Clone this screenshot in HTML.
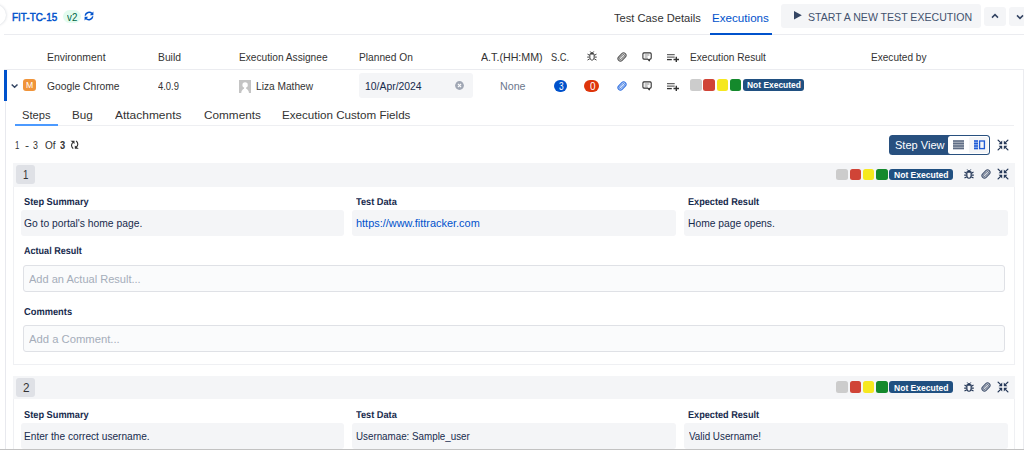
<!DOCTYPE html><html><head><meta charset="utf-8"><title>Test Execution</title><style>
html,body{margin:0;padding:0;}body{width:1024px;height:450px;overflow:hidden;position:relative;background:#fff;font-family:"Liberation Sans", sans-serif;}
.a{position:absolute;}.t{position:absolute;white-space:nowrap;line-height:1;transform-origin:0 0;}
</style></head><body>
<div class="a" style="left:-14.5px;top:4.8px;width:20.5px;height:20.5px;background:#fff;border-radius:10.25px;box-shadow:0 0 3px rgba(9,30,66,.22);"></div>
<div class="a" style="left:62.5px;top:10px;width:18.5px;height:13px;background:#e3fcef;border-radius:6.5px;"></div>
<svg class="a" style="left:84px;top:11px" width="10" height="10" viewBox="0 0 10 10"><g fill="none" stroke="#0052cc" stroke-width="1.45"><path d="M1.2 4.6A4 4 0 0 1 8 2.6"/><path d="M8.8 5.4A4 4 0 0 1 2 7.4"/></g><path d="M9.4 0.6V4.2H5.8Z M0.6 9.4V5.8H4.2Z" fill="#0052cc"/></svg>
<div class="a" style="left:4px;top:34px;width:1020px;height:1px;background:#ebecf0;"></div>
<div class="a" style="left:710px;top:33px;width:62px;height:2px;background:#0052cc;"></div>
<div class="a" style="left:781.3px;top:3.6px;width:199.7px;height:24.7px;background:#f4f5f7;border-radius:3px;"></div>
<svg class="a" style="left:793.8px;top:11.4px" width="8" height="8.4" viewBox="0 0 8 8.4"><path d="M0 0L7.8 4.2L0 8.4Z" fill="#344563"/></svg>
<div class="a" style="left:984.2px;top:7px;width:21.5px;height:19px;background:#f4f5f7;border-radius:3px;"></div>
<svg class="a" style="left:991px;top:13.2px" width="8" height="6" viewBox="0 0 8 6"><path d="M1 4.6L4 1.6L7 4.6" fill="none" stroke="#344563" stroke-width="1.5"/></svg>
<div class="a" style="left:1009.2px;top:7px;width:21.5px;height:19px;background:#f4f5f7;border-radius:3px;"></div>
<svg class="a" style="left:1016.2px;top:13.6px" width="8" height="6" viewBox="0 0 8 6"><path d="M1 1.4L4 4.4L7 1.4" fill="none" stroke="#344563" stroke-width="1.5"/></svg>
<div class="a" style="left:4px;top:69px;width:1020px;height:1px;background:#ebecf0;"></div>
<svg class="a" style="left:584px;top:48.4px" width="16" height="16" viewBox="-8 -8 16 16"><g fill="none" stroke="#444"><path stroke-width="0.94" d="M-2.1 -1.9H2.1V1.4Q2.1 4 0 4.3Q-2.1 4 -2.1 1.4Z"/><path stroke-width="0.98" d="M-2.2 -.6L-4.5 -1.9M-2.2 1.1H-4.8M-2.1 2.7L-4.5 4.1M2.2 -.6L4.5 -1.9M2.2 1.1H4.8M2.1 2.7L4.5 4.1"/><path stroke-width=".8" d="M-1 -3.6L-1.9 -4.7M1 -3.6L1.9 -4.7"/></g><path d="M-1.9 -2A1.9 2 0 0 1 1.9 -2Z" fill="#444"/></svg>
<svg class="a" style="left:613.9px;top:48.5px" width="16" height="16" viewBox="-8 -8 16 16"><g transform="rotate(45)" stroke="#555" fill="none"><rect x="-2.5" y="-4.7" width="5" height="9.4" rx="2.5" stroke-width="1.0" fill="#555" fill-opacity=".18"/><rect x="-1.05" y="-3.1" width="2.1" height="6.4" rx="1.05" stroke-width="0.85"/></g></svg>
<svg class="a" style="left:638.5px;top:48.5px" width="16" height="16" viewBox="-8 -8 16 16"><path d="M-3.1 -4.1H3.2A1 1 0 0 1 4.2 -3.1V1.1A1 1 0 0 1 3.2 2.1H2.9L2.3 3.9L.8 2.1H-3.1A1 1 0 0 1 -4.1 1.1V-3.1A1 1 0 0 1 -3.1 -4.1Z" fill="none" stroke="#333" stroke-width="1.1" stroke-linejoin="round"/><path d="M-2.3 -2H2.4M-2.3 0H.6" stroke="#333" stroke-opacity=".55" stroke-width="1"/><path d="M1 2.1H2.9L2.3 3.7Z" fill="#333"/></svg>
<svg class="a" style="left:665px;top:50px" width="16" height="16" viewBox="-8 -8 16 16"><path d="M-6 -3.3H1.7M-6 -.9H1.7" stroke="#333" stroke-opacity=".75" stroke-width="1.3"/><path d="M-6 1.6H-1.2" stroke="#333" stroke-width="1.3"/><path d="M.5 1.5H6M3.3 -1.2V4" stroke="#333" stroke-width="1.4"/></svg>
<div class="a" style="left:4px;top:70px;width:2.5px;height:31px;background:#0052cc;"></div>
<div class="a" style="left:4.5px;top:101px;width:1px;height:349px;background:#e8e9ee;"></div>
<svg class="a" style="left:10px;top:82px" width="10" height="8" viewBox="0 0 10 8"><path d="M1.7 2.5L4.6 5.3L7.5 2.5" fill="none" stroke="#344563" stroke-width="1.5"/></svg>
<div class="a" style="left:23.2px;top:78.8px;width:12.9px;height:11.9px;background:#f0943a;border-radius:3px;"></div>
<div class="a" style="left:239px;top:79.6px;width:12.1px;height:13.2px;background:#c4c4c4;"></div>
<svg class="a" style="left:239px;top:79.6px" width="12.1" height="13.2" viewBox="0 0 12.1 13.2"><circle cx="6.1" cy="4.9" r="2.7" fill="#fff"/><path d="M2.2 13.2C2.4 10.6 3.6 9.4 5 8.8L5.2 7H7L7.2 8.8C8.6 9.4 9.8 10.6 10 13.2Z" fill="#fff"/></svg>
<div class="a" style="left:358.5px;top:73px;width:114.5px;height:24.5px;background:#f4f5f7;border-radius:3px;"></div>
<svg class="a" style="left:455.4px;top:80.9px" width="9" height="9" viewBox="0 0 9 9"><circle cx="4.5" cy="4.5" r="4.4" fill="#a0a7b4"/><path d="M2.9 2.9L6.1 6.1M6.1 2.9L2.9 6.1" stroke="#fff" stroke-width="1.1"/></svg>
<div class="a" style="left:553.6px;top:79.5px;width:13.8px;height:12.4px;background:#0052cc;border-radius:6.2px;"></div>
<div class="a" style="left:583.8px;top:79.6px;width:15.2px;height:12.3px;background:#de350b;border-radius:6.2px;"></div>
<svg class="a" style="left:613.8px;top:78px" width="16" height="16" viewBox="-8 -8 16 16"><g transform="rotate(45)" stroke="#2f6fe0" fill="none"><rect x="-2.5" y="-4.7" width="5" height="9.4" rx="2.5" stroke-width="1.0" fill="#2f6fe0" fill-opacity=".18"/><rect x="-1.05" y="-3.1" width="2.1" height="6.4" rx="1.05" stroke-width="0.85"/></g></svg>
<svg class="a" style="left:638.5px;top:77.5px" width="16" height="16" viewBox="-8 -8 16 16"><path d="M-3.1 -4.1H3.2A1 1 0 0 1 4.2 -3.1V1.1A1 1 0 0 1 3.2 2.1H2.9L2.3 3.9L.8 2.1H-3.1A1 1 0 0 1 -4.1 1.1V-3.1A1 1 0 0 1 -3.1 -4.1Z" fill="none" stroke="#333" stroke-width="1.1" stroke-linejoin="round"/><path d="M-2.3 -2H2.4M-2.3 0H.6" stroke="#333" stroke-opacity=".55" stroke-width="1"/><path d="M1 2.1H2.9L2.3 3.7Z" fill="#333"/></svg>
<svg class="a" style="left:665px;top:79px" width="16" height="16" viewBox="-8 -8 16 16"><path d="M-6 -3.3H1.7M-6 -.9H1.7" stroke="#333" stroke-opacity=".75" stroke-width="1.3"/><path d="M-6 1.6H-1.2" stroke="#333" stroke-width="1.3"/><path d="M.5 1.5H6M3.3 -1.2V4" stroke="#333" stroke-width="1.4"/></svg>
<div class="a" style="left:690.3px;top:78.9px;width:11.5px;height:11.7px;background:#cccccc;border-radius:2.5px;"></div>
<div class="a" style="left:703.3px;top:78.9px;width:11.9px;height:11.7px;background:#d04437;border-radius:2.5px;"></div>
<div class="a" style="left:716.8px;top:78.9px;width:11.6px;height:11.7px;background:#f6e81f;border-radius:2.5px;"></div>
<div class="a" style="left:730px;top:78.9px;width:11.4px;height:11.7px;background:#14892c;border-radius:2.5px;"></div>
<div class="a" style="left:743.2px;top:78.6px;width:60.8px;height:12.2px;background:#205081;border-radius:3px;"></div>
<div class="a" style="left:15px;top:125px;width:999px;height:1px;background:#eeeff2;"></div>
<div class="a" style="left:15px;top:124px;width:43px;height:2px;background:#4c9aff;"></div>
<svg class="a" style="left:69px;top:139px" width="12" height="12" viewBox="69 139 12 12"><g fill="none" stroke="#333" stroke-width="1.15"><path d="M73 142.4Q69.9 145.3 73.2 148.6"/><path d="M76.2 140.9Q79.4 144.3 76.2 147.2"/></g><path d="M70.5 140.8H74.5V144.1Z M78.8 148.8H74.8V145.5Z" fill="#333"/></svg>
<div class="a" style="left:889px;top:135px;width:101px;height:19.8px;background:#28507f;border-radius:3.5px;"></div>
<div class="a" style="left:948.4px;top:136px;width:40.8px;height:18px;background:#fff;border-radius:2.5px;"></div>
<div class="a" style="left:968.8px;top:137px;width:19px;height:16px;background:#f4f5f7;border-radius:1.5px;"></div>
<svg class="a" style="left:953px;top:139.5px" width="11" height="10" viewBox="0 0 11 10"><rect x="0" y=".4" width="11" height="8.8" fill="#b3bac5"/><path d="M0 1H11M0 3.5H11M0 6H11M0 8.5H11" stroke="#5e6c84" stroke-width="1.3"/></svg>
<svg class="a" style="left:974px;top:139.5px" width="11.5" height="10" viewBox="0 0 11.5 10"><rect x="0" y=".4" width="4" height="8.8" fill="#9db8ee"/><path d="M0 1H4M0 3.5H4M0 6H4M0 8.5H4" stroke="#1f5bd6" stroke-width="1.3"/><rect x="5.6" y="1" width="4.8" height="7.6" fill="none" stroke="#1f5bd6" stroke-width="1.35"/></svg>
<svg class="a" style="left:994.6px;top:136.5px" width="16" height="16" viewBox="-8 -8 16 16"><g stroke="#253858" stroke-width="1.3" stroke-linecap="round" fill="none"><path d="M-4.9 -4.9L-2.6 -2.6M4.9 -4.9L2.6 -2.6M-4.9 4.9L-2.6 2.6M4.9 4.9L2.6 2.6"/></g><path d="M-.8 -4.4V-.8H-4.4ZM.8 -4.4V-.8H4.4ZM-.8 4.4V.8H-4.4ZM.8 4.4V.8H4.4Z" fill="#253858"/></svg>
<div class="a" style="left:13px;top:163px;width:1002px;height:23.6px;background:#f4f5f7;"></div>
<div class="a" style="left:16px;top:164.9px;width:19.3px;height:19.3px;background:#dfe1e6;border-radius:3px;"></div>
<div class="a" style="left:836.1px;top:168.75px;width:11.8px;height:11.2px;background:#cccccc;border-radius:2.5px;"></div>
<div class="a" style="left:849.8px;top:168.75px;width:11.3px;height:11.2px;background:#d04437;border-radius:2.5px;"></div>
<div class="a" style="left:862.9px;top:168.75px;width:11.3px;height:11.2px;background:#f6e81f;border-radius:2.5px;"></div>
<div class="a" style="left:875.8px;top:168.75px;width:12.1px;height:11.2px;background:#14892c;border-radius:2.5px;"></div>
<div class="a" style="left:889px;top:168.75px;width:64px;height:11.2px;background:#205081;border-radius:3px;"></div>
<svg class="a" style="left:960.65px;top:165.9px" width="16" height="16" viewBox="-8 -8 16 16"><g fill="none" stroke="#253858"><path stroke-width="1.10" d="M-2.1 -1.9H2.1V1.4Q2.1 4 0 4.3Q-2.1 4 -2.1 1.4Z"/><path stroke-width="1.15" d="M-2.2 -.6L-4.5 -1.9M-2.2 1.1H-4.8M-2.1 2.7L-4.5 4.1M2.2 -.6L4.5 -1.9M2.2 1.1H4.8M2.1 2.7L4.5 4.1"/><path stroke-width=".8" d="M-1 -3.6L-1.9 -4.7M1 -3.6L1.9 -4.7"/></g><path d="M-1.9 -2A1.9 2 0 0 1 1.9 -2Z" fill="#253858"/></svg>
<svg class="a" style="left:977.9px;top:166px" width="16" height="16" viewBox="-8 -8 16 16"><g transform="rotate(45)" stroke="#42526e" fill="none"><rect x="-2.5" y="-4.7" width="5" height="9.4" rx="2.5" stroke-width="1.0" fill="#42526e" fill-opacity=".18"/><rect x="-1.05" y="-3.1" width="2.1" height="6.4" rx="1.05" stroke-width="0.85"/></g></svg>
<svg class="a" style="left:994.5px;top:166px" width="16" height="16" viewBox="-8 -8 16 16"><g stroke="#253858" stroke-width="1.3" stroke-linecap="round" fill="none"><path d="M-4.9 -4.9L-2.6 -2.6M4.9 -4.9L2.6 -2.6M-4.9 4.9L-2.6 2.6M4.9 4.9L2.6 2.6"/></g><path d="M-.8 -4.4V-.8H-4.4ZM.8 -4.4V-.8H4.4ZM-.8 4.4V.8H-4.4ZM.8 4.4V.8H4.4Z" fill="#253858"/></svg>
<div class="a" style="left:21px;top:210.2px;width:323px;height:25.7px;background:#f4f5f7;border-radius:3px;"></div>
<div class="a" style="left:352px;top:210.2px;width:323.5px;height:25.7px;background:#f4f5f7;border-radius:3px;"></div>
<div class="a" style="left:683.5px;top:210.2px;width:324px;height:25.7px;background:#f4f5f7;border-radius:3px;"></div>
<div class="a" style="left:23px;top:265px;width:982px;height:27px;background:#fafbfc;border-radius:3px;border:1px solid #dfe1e6;box-sizing:border-box;"></div>
<div class="a" style="left:23px;top:325px;width:982px;height:27px;background:#fafbfc;border-radius:3px;border:1px solid #dfe1e6;box-sizing:border-box;"></div>
<div class="a" style="left:13px;top:186.6px;width:1002px;height:178.9px;background:transparent;border:1px solid #eff0f3;box-sizing:border-box;border-top:none;"></div>
<div class="a" style="left:13px;top:375.7px;width:1002px;height:23.6px;background:#f4f5f7;"></div>
<div class="a" style="left:16px;top:377.59999999999997px;width:19.3px;height:19.3px;background:#dfe1e6;border-radius:3px;"></div>
<div class="a" style="left:836.1px;top:381.45px;width:11.8px;height:11.2px;background:#cccccc;border-radius:2.5px;"></div>
<div class="a" style="left:849.8px;top:381.45px;width:11.3px;height:11.2px;background:#d04437;border-radius:2.5px;"></div>
<div class="a" style="left:862.9px;top:381.45px;width:11.3px;height:11.2px;background:#f6e81f;border-radius:2.5px;"></div>
<div class="a" style="left:875.8px;top:381.45px;width:12.1px;height:11.2px;background:#14892c;border-radius:2.5px;"></div>
<div class="a" style="left:889px;top:381.45px;width:64px;height:11.2px;background:#205081;border-radius:3px;"></div>
<svg class="a" style="left:960.65px;top:378.59999999999997px" width="16" height="16" viewBox="-8 -8 16 16"><g fill="none" stroke="#253858"><path stroke-width="1.10" d="M-2.1 -1.9H2.1V1.4Q2.1 4 0 4.3Q-2.1 4 -2.1 1.4Z"/><path stroke-width="1.15" d="M-2.2 -.6L-4.5 -1.9M-2.2 1.1H-4.8M-2.1 2.7L-4.5 4.1M2.2 -.6L4.5 -1.9M2.2 1.1H4.8M2.1 2.7L4.5 4.1"/><path stroke-width=".8" d="M-1 -3.6L-1.9 -4.7M1 -3.6L1.9 -4.7"/></g><path d="M-1.9 -2A1.9 2 0 0 1 1.9 -2Z" fill="#253858"/></svg>
<svg class="a" style="left:977.9px;top:378.7px" width="16" height="16" viewBox="-8 -8 16 16"><g transform="rotate(45)" stroke="#42526e" fill="none"><rect x="-2.5" y="-4.7" width="5" height="9.4" rx="2.5" stroke-width="1.0" fill="#42526e" fill-opacity=".18"/><rect x="-1.05" y="-3.1" width="2.1" height="6.4" rx="1.05" stroke-width="0.85"/></g></svg>
<svg class="a" style="left:994.5px;top:378.7px" width="16" height="16" viewBox="-8 -8 16 16"><g stroke="#253858" stroke-width="1.3" stroke-linecap="round" fill="none"><path d="M-4.9 -4.9L-2.6 -2.6M4.9 -4.9L2.6 -2.6M-4.9 4.9L-2.6 2.6M4.9 4.9L2.6 2.6"/></g><path d="M-.8 -4.4V-.8H-4.4ZM.8 -4.4V-.8H4.4ZM-.8 4.4V.8H-4.4ZM.8 4.4V.8H4.4Z" fill="#253858"/></svg>
<div class="a" style="left:21px;top:423.2px;width:323px;height:25.7px;background:#f4f5f7;border-radius:3px;"></div>
<div class="a" style="left:352px;top:423.2px;width:323.5px;height:25.7px;background:#f4f5f7;border-radius:3px;"></div>
<div class="a" style="left:683.5px;top:423.2px;width:324px;height:25.7px;background:#f4f5f7;border-radius:3px;"></div>
<div class="a" style="left:13px;top:399.3px;width:1002px;height:100px;background:transparent;border:1px solid #eff0f3;box-sizing:border-box;border-top:none;"></div>
<div class="a" style="left:1023px;top:69px;width:1px;height:381px;background:#ebecf0;"></div>
<div class="a" style="left:0px;top:448.5px;width:1024px;height:2px;background:#c2c2c2;"></div>
<span class="t" style="left:12.45px;top:12px;font-size:11.5px;color:#0052cc;-webkit-text-stroke:0.5px #0052cc;transform:scaleX(0.8629);">FIT-TC-15</span>
<span class="t" style="left:66.82px;top:12px;font-size:11px;color:#006644;transform:scaleX(0.8887);">v2</span>
<span class="t" style="left:614.13px;top:13px;font-size:11.5px;color:#333;transform:scaleX(0.9699);">Test Case Details</span>
<span class="t" style="left:712.33px;top:13px;font-size:11.5px;color:#0052cc;transform:scaleX(1.0112);">Executions</span>
<span class="t" style="left:807.69px;top:12px;font-size:11.5px;color:#42526e;transform:scaleX(0.9188);">START A NEW TEST EXECUTION</span>
<span class="t" style="left:47.23px;top:52px;font-size:11px;color:#333333;transform:scaleX(0.9478);">Environment</span>
<span class="t" style="left:158.24px;top:52px;font-size:11px;color:#333333;transform:scaleX(0.9382);">Build</span>
<span class="t" style="left:239.47px;top:52px;font-size:11px;color:#333333;transform:scaleX(0.9220);">Execution Assignee</span>
<span class="t" style="left:358.77px;top:52px;font-size:11px;color:#333333;transform:scaleX(0.9260);">Planned On</span>
<span class="t" style="left:481.26px;top:52px;font-size:11px;color:#333333;transform:scaleX(0.9705);">A.T.(HH:MM)</span>
<span class="t" style="left:551.44px;top:52px;font-size:11px;color:#333333;transform:scaleX(0.8440);">S.C.</span>
<span class="t" style="left:690.47px;top:52px;font-size:11px;color:#333333;transform:scaleX(0.9192);">Execution Result</span>
<span class="t" style="left:870.78px;top:52px;font-size:11px;color:#333333;transform:scaleX(0.9154);">Executed by</span>
<span class="t" style="left:26.34px;top:81px;font-size:9px;color:#fff;transform:scaleX(0.9600);">M</span>
<span class="t" style="left:47.24px;top:81px;font-size:11px;color:#333333;transform:scaleX(0.9346);">Google Chrome</span>
<span class="t" style="left:158.26px;top:81px;font-size:11px;color:#333333;transform:scaleX(0.8567);">4.0.9</span>
<span class="t" style="left:255.78px;top:81px;font-size:11px;color:#333333;transform:scaleX(0.9244);">Liza Mathew</span>
<span class="t" style="left:365.01px;top:81px;font-size:11px;color:#172b4d;transform:scaleX(0.9453);">10/Apr/2024</span>
<span class="t" style="left:499.91px;top:81px;font-size:11px;color:#6b778c;transform:scaleX(0.9708);">None</span>
<span class="t" style="left:558.68px;top:81px;font-size:11px;color:#fff;transform:scaleX(0.7557);">3</span>
<span class="t" style="left:589.59px;top:81px;font-size:11px;color:#fff;transform:scaleX(0.9023);">0</span>
<span class="t" style="left:747.14px;top:80px;font-size:9.5px;color:#fff;font-weight:700;transform:scaleX(0.8871);">Not Executed</span>
<span class="t" style="left:22.21px;top:110px;font-size:11.5px;color:#333333;transform:scaleX(0.9726);">Steps</span>
<span class="t" style="left:71.86px;top:110px;font-size:11.5px;color:#333333;transform:scaleX(1.0158);">Bug</span>
<span class="t" style="left:114.80px;top:110px;font-size:11.5px;color:#333333;transform:scaleX(1.0401);">Attachments</span>
<span class="t" style="left:203.55px;top:110px;font-size:11.5px;color:#333333;transform:scaleX(1.0228);">Comments</span>
<span class="t" style="left:282.20px;top:110px;font-size:11.5px;color:#333333;transform:scaleX(1.0095);">Execution Custom Fields</span>
<span class="t" style="left:14.64px;top:140px;font-size:11px;color:#333333;transform:scaleX(0.7131);">1</span>
<span class="t" style="left:25.49px;top:140px;font-size:11px;color:#333333;transform:scaleX(1.1125);">-</span>
<span class="t" style="left:33.46px;top:140px;font-size:11px;color:#333333;transform:scaleX(0.7993);">3</span>
<span class="t" style="left:44.98px;top:140px;font-size:11px;color:#333333;transform:scaleX(0.9111);">Of</span>
<span class="t" style="left:59.99px;top:140px;font-size:11px;color:#333333;font-weight:700;transform:scaleX(0.8458);">3</span>
<span class="t" style="left:894.61px;top:140px;font-size:11.5px;color:#fff;transform:scaleX(0.9605);">Step View</span>
<span class="t" style="left:22.96px;top:169px;font-size:12.5px;color:#333333;transform:scaleX(0.7720);">1</span>
<span class="t" style="left:894.21px;top:170px;font-size:9.5px;color:#fff;font-weight:700;transform:scaleX(0.8987);">Not Executed</span>
<span class="t" style="left:24.49px;top:198px;font-size:10px;color:#172b4d;font-weight:700;text-rendering:geometricPrecision;transform:scaleX(0.9241);">Step Summary</span>
<span class="t" style="left:356.49px;top:198px;font-size:10px;color:#172b4d;font-weight:700;text-rendering:geometricPrecision;transform:scaleX(0.9210);">Test Data</span>
<span class="t" style="left:687.56px;top:198px;font-size:10px;color:#172b4d;font-weight:700;text-rendering:geometricPrecision;transform:scaleX(0.9140);">Expected Result</span>
<span class="t" style="left:24.24px;top:218px;font-size:11px;color:#172b4d;transform:scaleX(0.9367);">Go to portal's home page.</span>
<span class="t" style="left:356.12px;top:218px;font-size:11px;color:#0052cc;transform:scaleX(0.9923);">https://www.fittracker.com</span>
<span class="t" style="left:687.75px;top:218px;font-size:11px;color:#172b4d;transform:scaleX(0.9339);">Home page opens.</span>
<span class="t" style="left:24.29px;top:247px;font-size:10px;color:#172b4d;font-weight:700;text-rendering:geometricPrecision;transform:scaleX(0.9045);">Actual Result</span>
<span class="t" style="left:28.77px;top:274px;font-size:11.5px;color:#a5adba;transform:scaleX(0.9598);">Add an Actual Result...</span>
<span class="t" style="left:24.28px;top:308px;font-size:10px;color:#172b4d;font-weight:700;text-rendering:geometricPrecision;transform:scaleX(0.9302);">Comments</span>
<span class="t" style="left:28.79px;top:334px;font-size:11.5px;color:#a5adba;transform:scaleX(0.9784);">Add a Comment...</span>
<span class="t" style="left:22.59px;top:382px;font-size:12.5px;color:#333333;transform:scaleX(0.9385);">2</span>
<span class="t" style="left:894.21px;top:383px;font-size:9.5px;color:#fff;font-weight:700;transform:scaleX(0.8987);">Not Executed</span>
<span class="t" style="left:24.49px;top:411px;font-size:10px;color:#172b4d;font-weight:700;text-rendering:geometricPrecision;transform:scaleX(0.9241);">Step Summary</span>
<span class="t" style="left:356.49px;top:411px;font-size:10px;color:#172b4d;font-weight:700;text-rendering:geometricPrecision;transform:scaleX(0.9210);">Test Data</span>
<span class="t" style="left:687.56px;top:411px;font-size:10px;color:#172b4d;font-weight:700;text-rendering:geometricPrecision;transform:scaleX(0.9140);">Expected Result</span>
<span class="t" style="left:24.47px;top:431px;font-size:11px;color:#172b4d;transform:scaleX(0.9215);">Enter the correct username.</span>
<span class="t" style="left:356.13px;top:431px;font-size:11px;color:#172b4d;transform:scaleX(0.8902);">Usernamae: Sample_user</span>
<span class="t" style="left:688.63px;top:431px;font-size:11px;color:#172b4d;transform:scaleX(0.8942);">Valid Username!</span>
</body></html>
